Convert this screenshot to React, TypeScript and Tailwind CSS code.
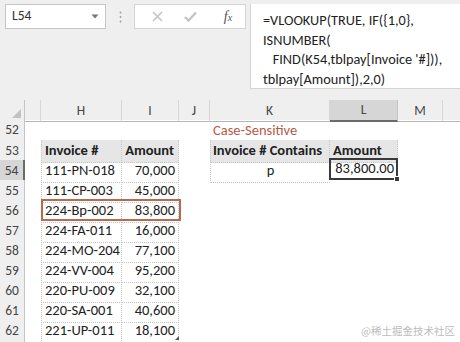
import React from "react";

const COLS = "grid-cols-[25px_16px_81px_57px_31px_120px_68px_45px_1fr]";

const rowsData: [string, string][] = [
  ["111-PN-018", "70,000"],
  ["111-CP-003", "45,000"],
  ["224-Bp-002", "83,800"],
  ["224-FA-011", "16,000"],
  ["224-MO-204", "77,100"],
  ["224-VV-004", "95,200"],
  ["220-PU-009", "32,100"],
  ["220-SA-001", "40,600"],
  ["221-UP-011", "18,100"],
];

function RowHeader({ n, sel }: { n?: number; sel?: boolean }) {
  return (
    <div
      className={
        "flex items-center justify-center font-normal text-[13.5px] text-[#444] border-b border-[#dadada] " +
        (sel
          ? "bg-[#d6d6d6] border-r-2 border-r-[#6a6a6a]"
          : "bg-[#efefef] border-r border-r-[#c4c4c4]")
      }
    >
      {n}
    </div>
  );
}

const dot = "border-dotted border-[#c4c4c4]";

export default function App() {
  return (
    <div
      className="w-[460px] h-[342px] overflow-hidden relative bg-white text-[#222]"
      style={{ fontFamily: "Carlito, Lato, 'Noto Sans', sans-serif" }}
    >
      {/* Top formula area */}
      <div className="h-[100px] bg-[#efefef] flex items-start pt-[4px] pl-[5px]">
        <div className="w-[101px] h-[25px] bg-white border border-[#c6c6c6] flex items-center justify-between pl-[6px] pr-[6px] text-[13.5px] text-[#333]">
          <span>L54</span>
          <svg width="8" height="5" viewBox="0 0 8 5">
            <path d="M0.5 0.5 L7.5 0.5 L4 4.5 Z" fill="#777" />
          </svg>
        </div>
        <div className="w-[28px] h-[25px] flex items-center justify-center">
          <svg width="3" height="12" viewBox="0 0 3 12">
            <circle cx="1.5" cy="1.5" r="0.9" fill="#9a9a9a" />
            <circle cx="1.5" cy="6" r="0.9" fill="#9a9a9a" />
            <circle cx="1.5" cy="10.5" r="0.9" fill="#9a9a9a" />
          </svg>
        </div>
        <div className="w-[112px] h-[25px] bg-white border border-[#d4d4d4] flex items-center">
          <div className="w-[44px] flex justify-center">
            <svg width="11" height="11" viewBox="0 0 11 11">
              <path d="M1 1 L10 10 M10 1 L1 10" stroke="#c4c4c4" strokeWidth="1.6" />
            </svg>
          </div>
          <div className="w-[22px] flex justify-center">
            <svg width="13" height="11" viewBox="0 0 13 11">
              <path d="M1 6 L4.5 9.5 L12 1.5" stroke="#c4c4c4" strokeWidth="2.4" fill="none" />
            </svg>
          </div>
          <div
            className="flex-1 flex justify-center text-[14px] italic text-[#555] pl-[10px]"
            style={{ fontFamily: "'Liberation Serif', serif" }}
          >
            <span>f</span>
            <span className="text-[10px] mt-[4px]">x</span>
          </div>
        </div>
        <div className="w-[4px]" />
        <div className="flex-1 h-[85px] bg-white border-l border-b border-[#d4d4d4] pl-[12px] pt-[7px] text-[14.3px] leading-[19.5px] text-[#222] whitespace-pre">
          <div>=VLOOKUP(TRUE, IF({"{"}1,0{"}"},</div>
          <div>ISNUMBER(</div>
          <div>{"   FIND(K54,tblpay[Invoice '#])),"}</div>
          <div>tblpay[Amount]),2,0)</div>
        </div>
      </div>

      {/* Column headers */}
      <div className={"grid h-[20px] bg-[#efefef] text-[13.5px] text-[#444] " + COLS}>
        <div className="relative border-b border-[#b5b5b5] border-r border-r-[#c4c4c4]">
          <svg className="absolute right-[3px] bottom-[3px]" width="9" height="9" viewBox="0 0 9 9">
            <path d="M9 0 L9 9 L0 9 Z" fill="#c2c2c2" />
          </svg>
        </div>
        {["", "H", "I", "J", "K"].map((c, i) => (
          <div
            key={i}
            className="flex items-center justify-center border-b border-[#b5b5b5] border-r border-r-[#d6d6d6]"
          >
            {c}
          </div>
        ))}
        <div className="flex items-center justify-center bg-[#d6d6d6] border-b-2 border-[#6a6a6a] border-r border-r-[#c4c4c4]">
          L
        </div>
        <div className="flex items-center justify-center border-b border-[#b5b5b5] border-r border-r-[#d6d6d6]">
          M
        </div>
        <div className="border-b border-[#b5b5b5]" />
      </div>

      {/* Body */}
      <div className="relative">
        {/* Row 52 */}
        <div className={"grid h-[20px] text-[14.5px] " + COLS}>
          <RowHeader n={52} />
          <div />
          <div />
          <div />
          <div />
          <div className="flex items-center pl-[3px] text-[#b55a48] whitespace-nowrap">Case-Sensitive</div>
          <div />
          <div />
          <div />
        </div>
        {/* Row 53 */}
        <div className={"grid h-[20px] text-[14.5px] font-bold " + COLS}>
          <RowHeader n={53} />
          <div />
          <div className={"flex items-center pl-[3px] bg-[#e6e6e6] border-l border-r border-b " + dot}>Invoice #</div>
          <div className={"flex items-center justify-end pr-[4px] bg-[#e6e6e6] border-r border-b " + dot}>Amount</div>
          <div />
          <div className={"flex items-center pl-[2px] bg-[#e6e6e6] border-l border-r border-b whitespace-nowrap " + dot}>
            Invoice # Contains
          </div>
          <div className={"flex items-center pl-[3px] bg-[#e6e6e6] border-r border-b " + dot}>Amount</div>
          <div />
          <div />
        </div>
        {rowsData.map(([inv, amt], i) => {
          const n = 54 + i;
          return (
            <div key={n} className={"grid h-[20px] text-[14.5px] " + COLS}>
              <RowHeader n={n} sel={n === 54} />
              <div />
              <div className={"flex items-center pl-[3px] border-l border-r border-b " + dot}>{inv}</div>
              <div className={"flex items-center justify-end pr-[3px] border-r border-b " + dot}>{amt}</div>
              <div />
              {n === 54 ? (
                <div className={"flex items-center justify-center border-l border-b " + dot}>p</div>
              ) : (
                <div />
              )}
              {n === 54 ? (
                <div className="relative flex items-center justify-end pr-[2px] border-2 border-[#3a3a3a] -mt-[2px] h-[22px] -ml-[1px]">
                  83,800.00
                  <div className="absolute -right-[4px] -bottom-[4px] w-[6px] h-[6px] bg-[#3a3a3a] border border-white" />
                </div>
              ) : (
                <div />
              )}
              <div />
              <div />
            </div>
          );
        })}
        {/* Row 63 (cut off) */}
        <div className={"grid h-[20px] " + COLS}>
          <RowHeader />
        </div>

        {/* Red highlight box around row 56 */}
        <div className="absolute left-[41px] top-[79px] w-[140px] h-[22px] border-2 border-[#b86a50] pointer-events-none" />
        {/* table resize handle */}
        <svg className="absolute left-[175px] top-[216px]" width="4" height="4" viewBox="0 0 4 4">
          <path d="M4 0 L4 4 L0 4 Z" fill="#555" />
        </svg>
      </div>

      {/* Watermark */}
      <div
        className="absolute right-[5px] bottom-[3px] text-[10.5px] text-[#bcbcbc]"
        style={{ fontFamily: "'Noto Sans CJK SC', sans-serif" }}
      >
        @稀土掘金技术社区
      </div>
    </div>
  );
}
